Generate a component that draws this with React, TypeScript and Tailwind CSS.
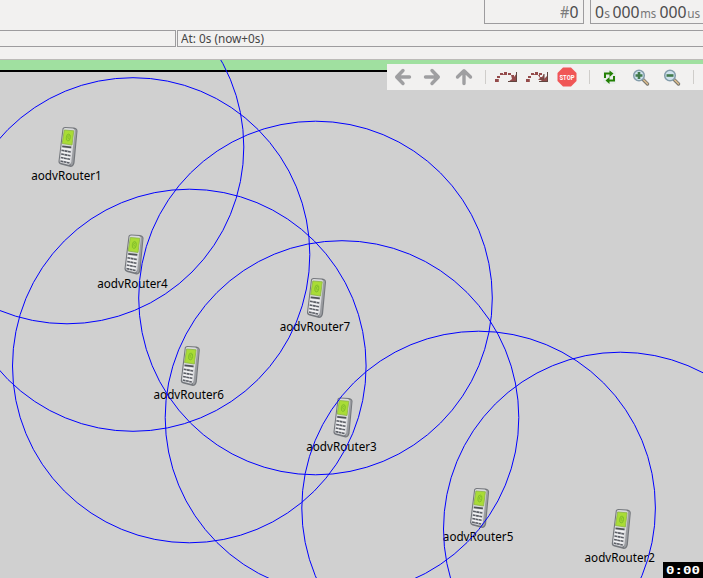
const ROUTERS = [
  { id: 1, x: 67, y: 147 },
  { id: 4, x: 133, y: 254.5 },
  { id: 7, x: 315.5, y: 298 },
  { id: 6, x: 189.3, y: 366 },
  { id: 3, x: 342, y: 417.5 },
  { id: 5, x: 478.6, y: 508 },
  { id: 2, x: 620.3, y: 529 },
];

function Phone({ x, y }: { x: number; y: number }) {
  return (
    <g transform={`translate(${x - 10} ${y - 21})`}>
      <path d="M5.500 2.500 Q6 1 8 1 L17 1.500 Q20.500 2 20.500 5 L17.500 37 Q16.500 41 13.500 41 L4 38.500 Q1.200 37.500 1.500 35 Z" fill="#74777c" />
      <path d="M17.500 3 Q20 3 19.500 6 L16.300 37 Q15.500 40 13.500 40 Z" fill="#9b9da1" />
      <path d="M6.500 3 Q7 1.800 9 2 L16 2.500 Q18.200 3 17.800 5 L14.300 36 Q13.500 39 11.500 38.700 L4.500 37 Q2.200 36.500 2.700 34 Z" fill="#d8d9dc" />
      <path d="M7.300 4 L16.800 4.800 L15 19 L5.200 17.500 Z" fill="#a9dc36" stroke="#8db445" strokeWidth="0.800" />
      <ellipse cx="11.300" cy="11.500" rx="2" ry="3.500" fill="#a1d632" stroke="#7cba2a" strokeWidth="0.800" transform="rotate(8 11.300 11.500)" />
      <path d="M12.500 9 L10.500 11 L12 13" fill="none" stroke="#7cba2a" strokeWidth="0.700" />
      <path d="M5.200 20.300 L14.300 21.300" stroke="#505358" strokeWidth="1.700" />
      <path d="M4.500 24.300 L14 26 M4.200 28 L13.500 29.800 M3.800 31.500 L13 33.300 M3.500 35 L12.500 37" stroke="#5c5f66" strokeWidth="1.600" strokeDasharray="2.800 0.500" />
      <path d="M4.800 22.400 L14.200 23.800 M4.500 26.200 L13.700 28 M4.200 29.800 L13.300 31.600 M3.800 33.300 L12.800 35.200" stroke="#f5f5f6" strokeWidth="1.200" />
    </g>
  );
}

function Arrow({ angle }: { angle: string }) {
  return (
    <svg className={`size-5 ${angle}`} viewBox="0 0 20 20">
      <path d="M10 3.500 L3.700 10 L10 16.500 M4 10 H16.500" fill="none" stroke="#9f9fa1" strokeWidth="3.400" strokeLinecap="round" strokeLinejoin="round" />
    </svg>
  );
}

function Step({ fast }: { fast?: boolean }) {
  return (
    <svg className="h-[12px] w-[24px]" viewBox="0 0 24 12">
      <g shapeRendering="crispEdges">
        <path d="M1 8h3v3h-3z M3 5h3v2h-3z M6 2h3v2h-3z M10 1h3v3h-3z M14 2h3v2h-3z" fill="#944b4b" />
        <path d="M4 8h1v3h-1z M9 3h1v1h-1z" fill="#a86c68" />
      </g>
      {fast ? (
        <>
          <path d="M13 4h2v2h2l2-3v5l3-3v-4h1v10h-9l3-2h-4l2-2z" fill="#944b4b" />
          <path d="M19 3v5h-4 M22.500 1v9.500h-8.500" fill="none" stroke="#614640" strokeWidth="1" />
        </>
      ) : (
        <>
          <path d="M17 4h3v2l3-4v9h-9l4-3z" fill="#944b4b" />
          <path d="M22.500 1v9.500h-8.500" fill="none" stroke="#614640" strokeWidth="1" />
        </>
      )}
    </svg>
  );
}

function Magnifier({ plus }: { plus?: boolean }) {
  return (
    <svg className="size-[18px]" viewBox="0 0 18 18">
      <path d="M11 11.500 L15.500 16" stroke="#77766f" strokeWidth="3.300" strokeLinecap="round" />
      <path d="M11.700 12 L15.500 15.800" stroke="#dcbc8c" strokeWidth="1.600" strokeLinecap="round" />
      <circle cx="7" cy="7.500" r="5.300" fill="#cfe2ee" stroke="#849dab" strokeWidth="1.500" />
      <path d={plus ? "M3.500 7.500h7M7 4v7" : "M3.500 7.500h7"} stroke="#417a4b" strokeWidth="2.600" />
    </svg>
  );
}

function Divider() {
  return <span className="h-[14px] w-px bg-[#cfcdca]" />;
}

function Toolbar() {
  return (
    <div className="absolute top-[64px] left-[387px] flex h-[26px] w-[316px] items-center bg-[#f2f1f0]">
      <div className="flex w-[98px] items-center pl-[6px]">
        <Arrow angle="rotate-0" />
        <Arrow angle="ml-[9px] rotate-180" />
        <Arrow angle="ml-[12px] rotate-90" />
      </div>
      <Divider />
      <div className="flex w-[103px] items-center gap-[7px] pl-[8px]">
        <Step />
        <Step fast />
        <svg className="ml-px size-[20px]" viewBox="0 0 20 20">
          <path d="M6 .5h8L19.500 6v8L14 19.500H6L.5 14V6z" fill="#f05656" />
          <text x="2.500" y="12.500" textLength="15" lengthAdjust="spacingAndGlyphs" fontFamily="Roboto, sans-serif" fontWeight="700" fontSize="7.500" fill="#fff">STOP</text>
        </svg>
      </div>
      <Divider />
      <div className="flex w-[103px] items-center gap-[13px] pl-[11px]">
        <svg className="mr-[1.5px] size-[16px]" viewBox="0 0 16 16">
          <rect x="2" y="1" width="13" height="14" rx="2" fill="#e8edeb" />
          <path d="M4 9 V4.500 H9 M13 7 V11.500 H8" fill="none" stroke="#238005" strokeWidth="2" />
          <path d="M8.500 1.500 L12.500 4.500 L8.500 8z M8.500 8 L4.500 11.500 L8.500 15z" fill="#238005" />
        </svg>
        <Magnifier plus />
        <Magnifier />
      </div>
      <Divider />
    </div>
  );
}

export default function App() {
  return (
    <main className="relative flex h-[578px] w-[703px] flex-col overflow-hidden bg-[#f2f1f0] font-['Open_Sans','Noto_Sans',sans-serif] text-[#4c4c4c]">
      <header className="flex h-[30px] justify-end gap-[6px]">
        <div className="flex h-[24px] w-[100px] justify-end border border-t-0 border-[#9d9c9e] pr-[4px]">
          <svg className="h-[23px] w-[19px]" fontFamily="'Noto Sans', sans-serif" fontSize="17" fill="#4c4c4c">
            <text x="0" y="18" fill="#7c7c7c" textLength="9.500" lengthAdjust="spacingAndGlyphs">#</text>
            <text x="9.500" y="18" textLength="9" lengthAdjust="spacingAndGlyphs">0</text>
          </svg>
        </div>
        <div className="h-[24px] w-[113px] overflow-hidden border-b border-l border-[#9d9c9e] pl-[4px] whitespace-nowrap">
          <svg className="h-[23px] w-[108px]" fontFamily="'Noto Sans', sans-serif" fontSize="17" fill="#4c4c4c">
            <text x="0" y="18" textLength="9" lengthAdjust="spacingAndGlyphs">0</text>
            <text x="9.200" y="18" fontSize="12" fill="#777">s</text>
            <text x="17.500" y="18" textLength="27" lengthAdjust="spacingAndGlyphs">000</text>
            <text x="45.200" y="18" fontSize="12" fill="#777" textLength="16" lengthAdjust="spacingAndGlyphs">ms</text>
            <text x="64.500" y="18" textLength="27" lengthAdjust="spacingAndGlyphs">000</text>
            <text x="92.200" y="18" fontSize="12" fill="#777" textLength="13" lengthAdjust="spacingAndGlyphs">us</text>
          </svg>
        </div>
      </header>
      <div className="flex h-[17px] gap-px">
        <div className="w-[176px] border border-l-0 border-[#9d9c9e]" />
        <div className="flex-1 border border-r-0 border-[#9d9c9e] pl-[3px]">
          <svg className="h-[15px] w-[90px]"><text x="0" y="12" textLength="83" lengthAdjust="spacingAndGlyphs" fontFamily="'Noto Sans', sans-serif" fontSize="12.500" fill="#454545">At: 0s (now+0s)</text></svg>
        </div>
      </div>
      <div className="mt-[12px] h-px bg-[#bcbab8]" />
      <div className="h-[10px] bg-[#a0e0a0]" />
      <div className="h-[2px] bg-black" />
      <div className="flex-1 bg-[#d0d0d0]" />
      <svg className="absolute inset-0" width="703" height="578" viewBox="0 0 703 578">
        <defs><clipPath id="scene"><rect y="60" width="703" height="518" /></clipPath></defs>
        {ROUTERS.map(({ id, x, y }) => (
          <g key={id}>
            <Phone x={x} y={y} />
            <text x={x - 0.5} y={y + 33} textAnchor="middle" textLength="70.500" lengthAdjust="spacingAndGlyphs" fontFamily="'Noto Sans', sans-serif" fontSize="12.500" fill="#000">{`aodvRouter${id}`}</text>
          </g>
        ))}
        <g clipPath="url(#scene)" fill="none" stroke="#0000ff">
          {ROUTERS.map(({ id, x, y }) => <circle key={id} cx={x} cy={y} r="176.800" />)}
        </g>
      </svg>
      <Toolbar />
      <div className="absolute right-0 bottom-0 flex h-[16px] w-[40px] items-center justify-center bg-black">
        <svg width="40" height="16"><text x="3" y="11.500" textLength="34" lengthAdjust="spacingAndGlyphs" fontFamily="'DejaVu Sans Mono', monospace" fontWeight="bold" fontSize="10" fill="#fff">0:00</text></svg>
      </div>
    </main>
  );
}
